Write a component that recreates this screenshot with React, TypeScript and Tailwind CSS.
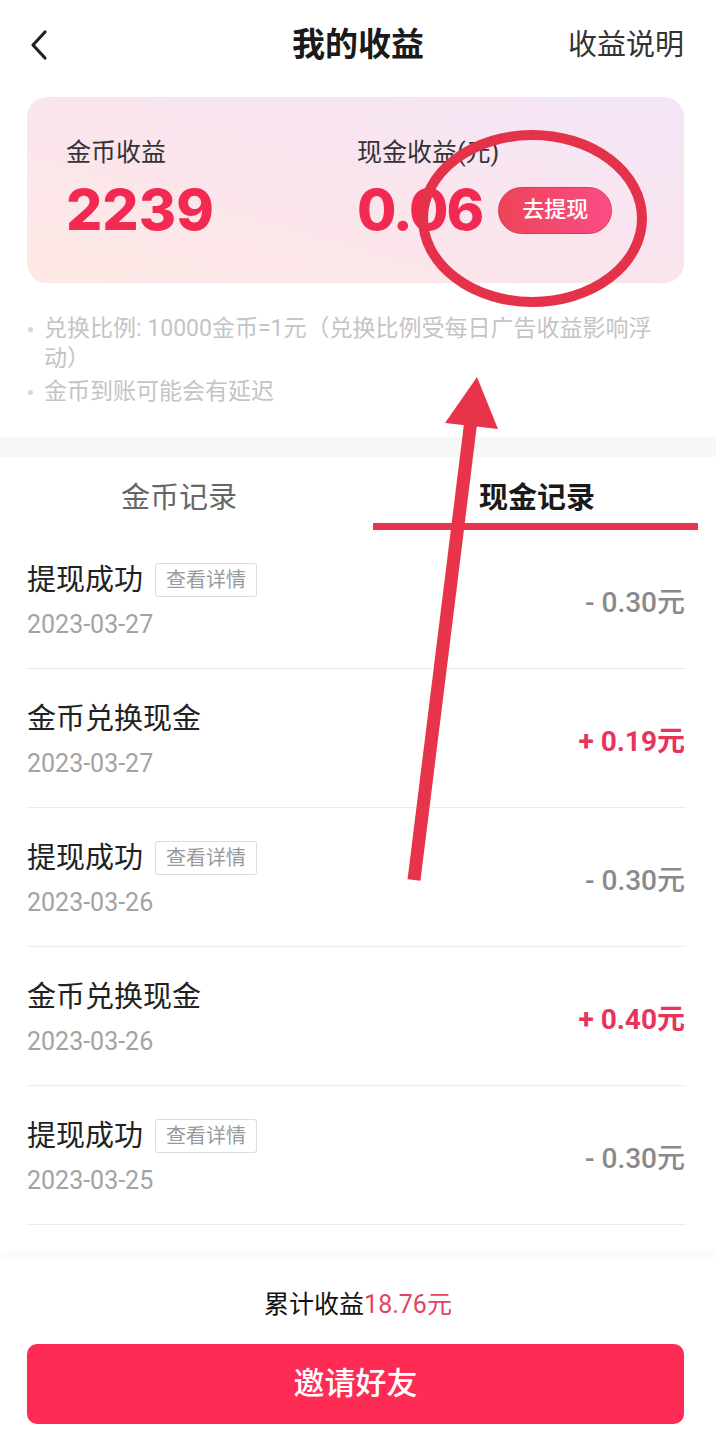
import React from "react";

type Row = { title: string; tag: boolean; date: string; amount: string; positive: boolean };

const rows: Row[] = [
  { title: "提现成功", tag: true, date: "2023-03-27", amount: "- 0.30元", positive: false },
  { title: "金币兑换现金", tag: false, date: "2023-03-27", amount: "+ 0.19元", positive: true },
  { title: "提现成功", tag: true, date: "2023-03-26", amount: "- 0.30元", positive: false },
  { title: "金币兑换现金", tag: false, date: "2023-03-26", amount: "+ 0.40元", positive: true },
  { title: "提现成功", tag: true, date: "2023-03-25", amount: "- 0.30元", positive: false },
];

export default function App() {
  return (
    <div className="relative w-[716px] h-[1441px] bg-white overflow-hidden font-['Roboto','Noto_Sans_CJK_SC',sans-serif] flex flex-col">
      {/* Header */}
      <div className="h-[90px] grid grid-cols-[1fr_auto_1fr] items-center shrink-0">
        <div className="pl-[30px] flex items-center">
          <svg width="20" height="32" viewBox="0 0 20 32">
            <polyline points="15,3 3,16 15,29" fill="none" stroke="#222" strokeWidth="3.2" strokeLinecap="round" strokeLinejoin="round" />
          </svg>
        </div>
        <div className="text-[33px] leading-[40px] font-bold text-[#1a1a1a]">我的收益</div>
        <div className="flex justify-end pr-[32px] text-[29px] leading-[40px] text-[#333]">收益说明</div>
      </div>

      {/* Card */}
      <div className="ml-[27px] mr-[32px] mt-[7px] h-[186px] shrink-0 rounded-[20px] bg-linear-to-tr from-[#fde8e4] via-[#fbe5ee] to-[#f3e6f6] flex pl-[39px] pt-[39px]">
        <div className="w-[291px]">
          <div className="text-[25px] leading-[34px] text-[#333]">金币收益</div>
          <div className="mt-[10px] text-[57px] leading-[60px] font-extrabold text-[#f22a52] font-['Inter',sans-serif]">2239</div>
        </div>
        <div>
          <div className="text-[25px] leading-[34px] text-[#333]">现金收益(元)</div>
          <div className="mt-[10px] flex items-center h-[60px]">
            <span className="text-[57px] leading-[60px] font-extrabold tracking-[-2px] text-[#f22a52] font-['Inter',sans-serif]">0.06</span>
            <div className="ml-[16px] w-[114px] h-[47px] rounded-full bg-linear-to-r from-[#ee4457] to-[#fb4c86] border border-[#e0364f] flex items-center justify-center text-white text-[22px] leading-[30px] font-medium">
              去提现
            </div>
          </div>
        </div>
      </div>

      {/* Notes */}
      <div className="h-[154px] shrink-0 pt-[31px] pl-[27px] text-[23px] leading-[30px] text-[#c4c4c4]">
        <div className="flex">
          <div className="w-[5px] h-[5px] rounded-full bg-[#d6d6d6] mt-[13px] ml-[1px] shrink-0" />
          <div className="ml-[11px] whitespace-nowrap">
            兑换比例: 10000金币=1元（兑换比例受每日广告收益影响浮
            <br />
            动）
          </div>
        </div>
        <div className="flex mt-[3px]">
          <div className="w-[5px] h-[5px] rounded-full bg-[#d6d6d6] mt-[13px] ml-[1px] shrink-0" />
          <div className="ml-[11px] whitespace-nowrap">金币到账可能会有延迟</div>
        </div>
      </div>

      {/* Band */}
      <div className="h-[20px] shrink-0 bg-[#f7f7f7]" />

      {/* Tabs */}
      <div className="h-[73px] shrink-0 flex">
        <div className="flex-1 flex items-center justify-center pt-[9px] text-[29px] leading-[34px] text-[#666]">金币记录</div>
        <div className="flex-1 flex items-center justify-center pt-[9px] text-[29px] leading-[34px] text-[#1a1a1a] font-bold">现金记录</div>
      </div>

      {/* Rows */}
      <div className="ml-[27px] mr-[30px] shrink-0">
        {rows.map((r, i) => (
          <div key={i} className="h-[139px] border-b border-[#ececec] flex justify-between">
            <div className="pt-[33px]">
              <div className="flex items-center h-[34px]">
                <span className="text-[29px] leading-[34px] text-[#222]">{r.title}</span>
                {r.tag && (
                  <span className="ml-[12px] h-[34px] px-[10px] border border-[#dcdcdc] rounded-[3px] text-[20px] leading-[32px] text-[#9a9a9a]">
                    查看详情
                  </span>
                )}
              </div>
              <div className="mt-[13px] text-[25px] leading-[30px] text-[#a3a3a3]">{r.date}</div>
            </div>
            <div
              className={
                r.positive
                  ? "pt-[56px] pr-[1px] text-[28px] leading-[34px] font-bold text-[#e8335a]"
                  : "pt-[56px] pr-[1px] text-[28px] leading-[34px] font-medium text-[#8a8a8a]"
              }
            >
              {r.amount}
            </div>
          </div>
        ))}
      </div>

      <div className="flex-1" />

      {/* Footer */}
      <div className="h-[184px] shrink-0 bg-white shadow-[0_-3px_8px_rgba(0,0,0,0.035)] pt-[33px] flex flex-col">
        <div className="text-center text-[25px] leading-[30px] text-[#111]">
          累计收益<span className="text-[#e24463]">18.76元</span>
        </div>
        <div className="mt-[24px] ml-[27px] mr-[32px] h-[80px] rounded-[10px] bg-[#fe2c55] flex items-center justify-center text-white text-[31px] leading-[40px] font-medium">
          邀请好友
        </div>
      </div>

      {/* Annotation overlay */}
      <svg className="absolute left-0 top-0 pointer-events-none" width="716" height="1441" viewBox="0 0 716 1441">
        <ellipse cx="532.5" cy="218.5" rx="109.5" ry="83.5" fill="none" stroke="#e3324a" strokeWidth="10" />
        <rect x="373" y="523" width="325" height="7" fill="#e8344c" />
        <line x1="414" y1="880" x2="471" y2="420" stroke="#e8344a" strokeWidth="13" />
        <polygon points="477,377 445,423 498,429" fill="#e8344a" />
      </svg>
    </div>
  );
}
